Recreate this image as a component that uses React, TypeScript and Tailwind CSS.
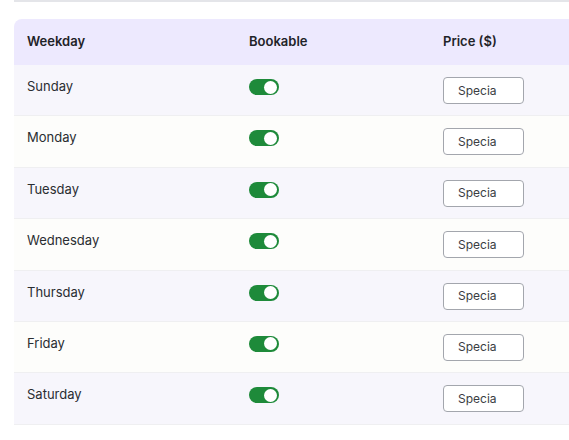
const DAYS = ['Sunday', 'Monday', 'Tuesday', 'Wednesday', 'Thursday', 'Friday', 'Saturday'];

function Toggle() {
  return (
    <span className="flex h-[16px] w-[30px] items-center justify-end rounded-full bg-[#1e8a3a] pr-[2px]">
      <span className="h-[13px] w-[13px] rounded-full bg-white" />
    </span>
  );
}

export default function App() {
  return (
    <div className="h-[440px] w-[569px] overflow-hidden bg-white font-['Inter',sans-serif] text-[#1f2328]">
      <div className="ml-[14px] h-[2px] bg-[#e4e5e9]" />
      <div className="ml-[14px] mt-[17px] w-[640px] overflow-hidden rounded-tl-lg">
        <div className="flex h-[46px] items-center bg-[#ede9fe] text-[13px] font-semibold">
          <div className="w-[235px] pl-[13px]">Weekday</div>
          <div className="w-[194px]">Bookable</div>
          <div>Price ($)</div>
        </div>
        {DAYS.map((day, i) => (
          <div
            key={day}
            className={`flex h-[51.4px] items-start border-b border-[#efeff1] pt-[12px] text-[13px] text-[#2a2d31] ${
              i % 2 === 0 ? 'bg-[#f7f6fc]' : 'bg-[#fdfdfb]'
            }`}
          >
            <div className="w-[235px] pl-[13px] leading-[18px]">{day}</div>
            <div className="w-[194px] pt-[2px]">
              <Toggle />
            </div>
            <div className="flex h-[27px] w-[81px] items-center rounded-[4px] border border-[#a3a6ad] bg-white pl-[14px] text-[12px] text-[#3a3d42]">
              Specia
            </div>
          </div>
        ))}
      </div>
    </div>
  );
}
